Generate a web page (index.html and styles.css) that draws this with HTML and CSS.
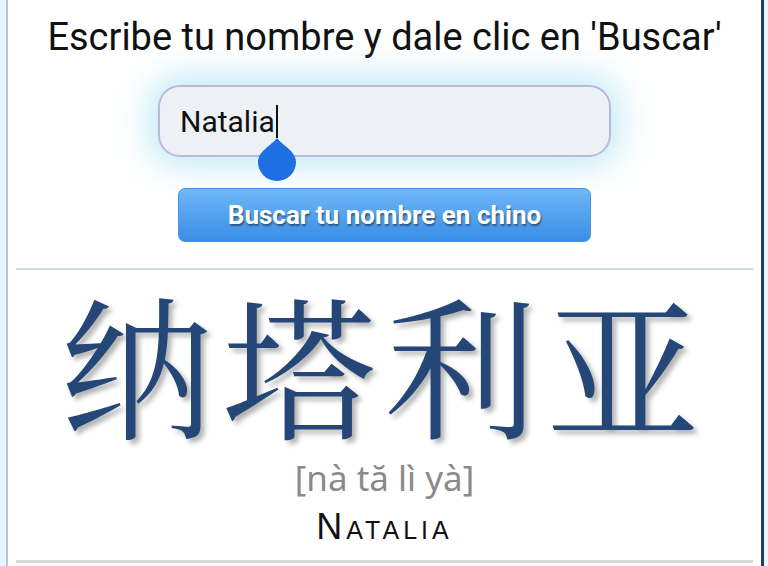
FILE: index.html
```html
<!DOCTYPE html>
<html lang="es">
<head>
  <meta charset="UTF-8">
  <meta name="viewport" content="width=device-width, initial-scale=1.0">
  <title>Tu nombre en chino</title>
  <link rel="stylesheet" href="styles.css">
</head>
<body>
  <div class="page">
    <div class="search-box">
      <h1 class="prompt">Escribe tu nombre y dale clic en 'Buscar'</h1>
      <div class="name-field">
        <span class="name-text">Natalia</span><span class="caret">
          <!-- text selection handle under the cursor -->
          <svg class="caret-handle" width="38" height="43" viewBox="0 0 38 43">
            <path d="M19 0 C25 8 38 13 38 24 A19 19 0 0 1 0 24 C0 13 13 8 19 0 Z" fill="#1d6fe2"/>
          </svg>
        </span>
      </div>
      <button class="search-button">Buscar tu nombre en chino</button>
    </div>

    <div class="result">
      <div class="hanzi">纳塔利亚</div>
      <div class="pinyin">[nà tă lì yà]</div>
      <div class="latin-name">Natalia</div>
    </div>
  </div>
</body>
</html>
```

FILE: styles.css
```css
body {
  margin: 0;
  padding: 0;
  background-color: #e9f5fc;
  font-family: Roboto, "Noto Sans", Arial, sans-serif;
}

.page {
  margin: 0 4px 0 6px;
  min-height: 100vh;
  background-color: white;
  border-left: 2px solid #b3c9d8;
  border-right: 3px solid #1f3d5d;
  padding: 0 8px;
}

.search-box {
  display: flex;
  flex-direction: column;
  align-items: center;
  padding-top: 14px;
  padding-bottom: 26px;
  border-bottom: 2px solid #cfdbe5;
}

.prompt {
  margin: 0;
  font-size: 38px;
  font-weight: normal;
  line-height: 46px;
  color: #111;
}

.name-field {
  box-sizing: border-box;
  width: 453px;
  height: 72px;
  margin-top: 25px;
  padding: 0 20px;
  display: flex;
  align-items: center;
  background-color: #edf1f6;
  border: 2px solid #b9b9da;
  border-radius: 22px;
  box-shadow: 0 0 32px 10px rgba(160, 222, 240, 0.6);
  font-size: 30px;
  color: #111;
}

.caret {
  position: relative;
  width: 2px;
  height: 33px;
  margin-left: 1px;
  background-color: #111;
}

.caret-handle {
  position: absolute;
  left: -18px;
  top: 33px;
}

.search-button {
  width: 413px;
  height: 54px;
  margin-top: 31px;
  background: linear-gradient(#6fb8f7, #3a8de6);
  border: 1px solid #4a93df;
  border-radius: 7px;
  color: white;
  font-family: Roboto, Arial, sans-serif;
  font-size: 26px;
  font-weight: bold;
  text-shadow: 1px 2px 2px rgba(0, 0, 0, 0.45);
  cursor: pointer;
}

.result {
  text-align: center;
  padding-bottom: 13px;
  border-bottom: 3px solid #d9d9d9;
}

.hanzi {
  padding-top: 12px;
  font-family: "Noto Serif CJK SC", "Noto Sans CJK SC", serif;
  font-size: 153px;
  line-height: 160px;
  letter-spacing: 9px;
  color: #244777;
  text-shadow: 4px 4px 5px rgba(0, 0, 0, 0.3);
}

.pinyin {
  margin-top: 15px;
  font-family: "Noto Sans", sans-serif;
  font-size: 35px;
  line-height: 42px;
  color: #8a8a8a;
}

.latin-name {
  margin-top: 8px;
  font-family: "Liberation Sans", Arial, sans-serif;
  font-size: 36px;
  line-height: 40px;
  font-variant: small-caps;
  letter-spacing: 4px;
  color: #111;
}
```
